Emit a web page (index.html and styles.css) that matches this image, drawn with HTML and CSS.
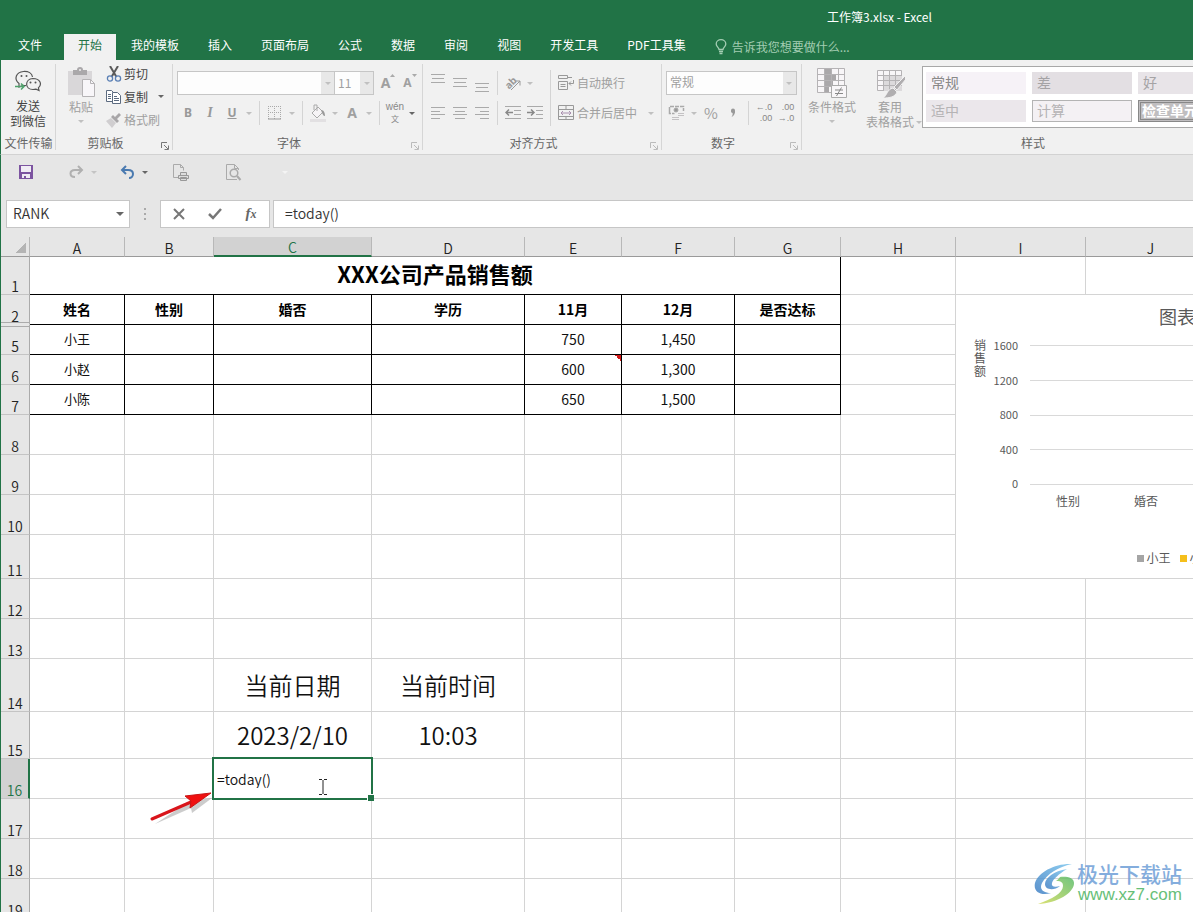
FILE: index.html
```html
<!DOCTYPE html>
<html lang="zh-CN">
<head>
<meta charset="utf-8">
<title>工作簿3.xlsx - Excel</title>
<link rel="stylesheet" href="styles.css">
</head>
<body>
<div class="app">
  <header class="titlebar">
    <div class="doc-title">工作簿3.xlsx - Excel</div>
    <nav class="tabs">
      <button class="tab file">文件</button>
      <button class="tab active">开始</button>
      <button class="tab">我的模板</button>
      <button class="tab">插入</button>
      <button class="tab">页面布局</button>
      <button class="tab">公式</button>
      <button class="tab">数据</button>
      <button class="tab">审阅</button>
      <button class="tab">视图</button>
      <button class="tab">开发工具</button>
      <button class="tab">PDF工具集</button>
      <button class="tell"><svg width="12" height="16" viewBox="0 0 12 16" fill="none" stroke="currentColor" stroke-width="1.3"><path d="M4 10.500C4 8.500 1.200 7.500 1.200 5a4.800 4.300 0 0 1 9.600 0c0 2.500-2.800 3.500-2.800 5.500zM4 12.500h4M4.500 14.500h3"/></svg>告诉我您想要做什么...</button>
    </nav>
  </header>

  <section class="ribbon">
    <div class="group g-send">
      <div class="body">
        <button class="big dark">
          <svg width="28" height="30" viewBox="0 0 28 30" fill="none" stroke="#555" stroke-width="1.200"><path d="M12 18.500c-1 .1-2 .1-3-.2L5 20v-3.500C-.500 12 2 5 9.500 4.500c5-.3 8.500 2 9 5.500"/><path d="M19 11.500c-8.500.5-8.500 11 0 11 1 0 2-.1 3-.4l3 1.400-.6-2.600C28.500 17 26 11.500 19 11.500z"/><g fill="#555" stroke="none"><circle cx="7.500" cy="9" r="1"/><circle cx="12.500" cy="9" r="1"/><circle cx="16.500" cy="15.500" r="1"/><circle cx="21.500" cy="15.500" r="1"/></g><path d="M1 19.500h9M7 16.500l3 3-3 3" stroke="#4fa36c" stroke-width="1.500"/></svg>
          <span>发送<br>到微信</span>
        </button>
      </div>
      <div class="label">文件传输</div>
    </div>

    <div class="group g-clip">
      <div class="body">
        <button class="big">
          <svg width="30" height="31" viewBox="0 0 30 31"><path d="M2 4h24v24H2z" fill="#d9d7d9"/><path d="M7 3h4a3 3 0 0 1 6 0h4v5H7z" fill="#aaa8aa"/><circle cx="14" cy="3" r="1" fill="#eee"/><path d="M16.500 12.500h8l4 4v13h-12z" fill="#f8f6f9" stroke="#b5b3b5"/><path d="M24.500 12.500v4h4" fill="none" stroke="#b5b3b5"/></svg>
          <span>粘贴</span><i class="arr"></i>
        </button>
        <div class="stack">
          <button class="item dark"><svg width="16" height="16" viewBox="0 0 16 16" fill="none"><path d="M4 0l6.500 11M12 0L5.500 11" stroke="#5a5a5a" stroke-width="2"/><circle cx="4" cy="12.500" r="2.600" stroke="#5b80b5" stroke-width="1.300"/><circle cx="12" cy="12.500" r="2.600" stroke="#5b80b5" stroke-width="1.300"/></svg>剪切</button>
          <button class="item dark"><svg width="16" height="16" viewBox="0 0 16 16" fill="#fff" stroke="#5c6b80"><path d="M.5 1.500h5l3 3v8h-8z"/><path d="M2 5.500h3M2 7.500h3M2 9.500h3"/><path d="M6.500 3.500h5l3 3v8h-8z"/><path d="M8 7.500h3M8 9.500h5M8 11.500h5"/></svg>复制<i class="arr"></i></button>
          <button class="item"><svg width="16" height="16" viewBox="0 0 16 16"><path d="M0 9l5-3 5 5-4 5z" fill="#d0ced0"/><path d="M5 5l2-2 2 2 4-4 2 2-4 4 2 2-2 2z" fill="#a8a6a8"/></svg>格式刷</button>
        </div>
      </div>
      <div class="label">剪贴板</div>
      <button class="launch" aria-label="剪贴板选项"><svg width="8" height="8" viewBox="0 0 8 8" fill="none" stroke="#777"><path d="M.5 6V.5H6M3 3l4 4M7.500 3.500v4h-4"/></svg></button>
    </div>

    <div class="group g-font">
      <div class="body rows">
        <div class="row">
          <span class="combo fname"><input aria-label="字体"><button aria-label="字体列表"><i class="arr"></i></button></span>
          <span class="combo fsize"><input aria-label="字号" value="11"><button aria-label="字号列表"><i class="arr"></i></button></span>
          <button class="ic"><span class="glyph">A</span><svg width="5" height="12" viewBox="0 0 5 12"><path d="M0 3h5L2.500 0z" fill="#aaa"/></svg></button>
          <button class="ic"><span class="glyph small">A</span><svg width="5" height="12" viewBox="0 0 5 12"><path d="M0 0h5L2.500 3z" fill="#aaa"/></svg></button>
        </div>
        <div class="row">
          <button class="ic"><b>B</b></button><button class="ic"><i class="ital">I</i></button><button class="ic"><u>U</u></button><button class="dd"><i class="arr"></i></button>
          <i class="sep"></i>
          <button class="ic"><svg width="14" height="14" viewBox="0 0 14 14" fill="none" stroke="#aaa"><path d="M.5 0v13M6.500 0v13M12.500 0v13M0 .5h13M0 6.500h13" stroke-dasharray="1 1"/><path d="M0 13h13" stroke="#999"/></svg></button><button class="dd"><i class="arr"></i></button>
          <i class="sep"></i>
          <button class="ic"><svg width="18" height="18" viewBox="0 0 18 18" fill="none"><path d="M3 9l6-6 5 5-6 6z" fill="#f6f4f6" stroke="#aaa"/><path d="M5 6V1h3v6" stroke="#aaa"/><path d="M12 6c3 0 4 3 4 6-2 0-2-2-3-3z" fill="#999"/><path d="M1 15h16v3H1z" fill="#e2e0e2"/></svg></button><button class="dd"><i class="arr"></i></button>
          <button class="ic"><span class="glyph">A</span></button><button class="dd"><i class="arr"></i></button>
          <i class="sep"></i>
          <button class="ic"><span class="wen"><span>wén</span><span>文</span></span></button><button class="dd dark"><i class="arr"></i></button>
        </div>
      </div>
      <div class="label">字体</div>
      <button class="launch" aria-label="字体选项"><svg width="8" height="8" viewBox="0 0 8 8" fill="none" stroke="#bbb"><path d="M.5 6V.5H6M3 3l4 4M7.500 3.500v4h-4"/></svg></button>
    </div>

    <div class="group g-align">
      <div class="body">
        <div class="rows">
          <div class="row">
            <button class="ic"><svg width="14" height="18" viewBox="0 0 14 18" stroke="#aaa"><path d="M0 .5h14M1 4.500h12M0 8.500h14"/></svg></button>
            <button class="ic"><svg width="14" height="18" viewBox="0 0 14 18" stroke="#aaa"><path d="M0 4.500h14M1 8.500h12M0 12.500h14"/></svg></button>
            <button class="ic"><svg width="14" height="18" viewBox="0 0 14 18" stroke="#aaa"><path d="M0 9.500h14M1 13.500h12M0 17.500h14"/></svg></button>
            <i class="sep"></i>
            <button class="ic"><svg class="abicon" width="18" height="18" viewBox="0 0 18 18"><text x="0" y="12" transform="rotate(-45 7 8)" class="abtxt">ab</text><path d="M7 16l9-9M11.500 7H16v4.500" fill="none" stroke="#999"/></svg></button><button class="dd"><i class="arr"></i></button>
          </div>
          <div class="row">
            <button class="ic"><svg width="14" height="12" viewBox="0 0 14 12" stroke="#aaa"><path d="M0 .5h14M0 4.500h9M0 7.500h14M0 11.500h9"/></svg></button>
            <button class="ic"><svg width="14" height="12" viewBox="0 0 14 12" stroke="#aaa"><path d="M0 .5h14M2 4.500h10M0 7.500h14M2 11.500h10"/></svg></button>
            <button class="ic"><svg width="14" height="12" viewBox="0 0 14 12" stroke="#aaa"><path d="M0 .5h14M5 4.500h9M0 7.500h14M5 11.500h9"/></svg></button>
            <i class="sep"></i>
            <button class="ic"><svg width="16" height="14" viewBox="0 0 16 14" fill="none" stroke="#aaa"><path d="M0 .5h16M9 4.500h7M9 8.500h7M0 12.500h16"/><path d="M1 6.500h7M4 3.500l-3 3 3 3" stroke="#888" stroke-width="1.500"/></svg></button>
            <button class="ic"><svg width="16" height="14" viewBox="0 0 16 14" fill="none" stroke="#aaa"><path d="M0 .5h16M9 4.500h7M9 8.500h7M0 12.500h16"/><path d="M0 6.500h7M4 3.500l3 3-3 3" stroke="#888" stroke-width="1.500"/></svg></button>
          </div>
        </div>
        <i class="sep tall"></i>
        <div class="rows">
          <button class="item"><svg width="16" height="16" viewBox="0 0 16 16" fill="none" stroke="#999"><path d="M.5.500h9v3h-9zM9 2.500h5M.5 6.500h9v8h-9zM2.500 9.500h5M2.500 11.500h5M15.500 5v3.500H11M13 6.500l-2 2 2 2"/></svg>自动换行</button>
          <button class="item"><svg width="16" height="16" viewBox="0 0 16 16" fill="none" stroke="#999"><path d="M.5.500h15v14H.5zM0 4.500h16M0 11.500h16M8 1v3M8 12v3"/><path d="M3 8h10M5 6L3 8l2 2M11 6l2 2-2 2" stroke="#a98fae"/></svg>合并后居中<i class="arr"></i></button>
        </div>
      </div>
      <div class="label">对齐方式</div>
      <button class="launch" aria-label="对齐选项"><svg width="8" height="8" viewBox="0 0 8 8" fill="none" stroke="#bbb"><path d="M.5 6V.5H6M3 3l4 4M7.500 3.500v4h-4"/></svg></button>
    </div>

    <div class="group g-num">
      <div class="body rows">
        <div class="row"><span class="numfmt"><select aria-label="数字格式"><option>常规</option></select><i class="arr"></i></span></div>
        <div class="row">
          <button class="ic"><svg width="18" height="16" viewBox="0 0 18 16" fill="none" stroke="#aaa"><path d="M1.500 6V1.500h14V6M1.500 6v2.500h5" stroke-width="1.500" stroke-dasharray="4 1"/><circle cx="8" cy="5" r="2" fill="#999"/><path d="M10 8.500h6M10 10.500h6M4 12.500h7M4 14.500h7" stroke="#c4c2c4"/></svg></button><button class="dd"><i class="arr"></i></button>
          <button class="ic"><span class="pct">%</span></button>
          <button class="ic"><svg width="8" height="10" viewBox="0 0 8 10"><path d="M2 2.500a2 2 0 0 1 4 0C6.500 5 5 8 2.500 9c1-1.500 1.500-3 1-4A2 2 0 0 1 2 2.500z" fill="#999"/></svg></button>
          <i class="sep"></i>
          <button class="ic"><span class="dec">←.0<br>.00</span></button>
          <button class="ic"><span class="dec">.00<br>→.0</span></button>
        </div>
      </div>
      <div class="label">数字</div>
      <button class="launch" aria-label="数字选项"><svg width="8" height="8" viewBox="0 0 8 8" fill="none" stroke="#bbb"><path d="M.5 6V.5H6M3 3l4 4M7.500 3.500v4h-4"/></svg></button>
    </div>

    <div class="group g-style">
      <div class="body">
        <button class="big cond">
          <svg width="30" height="31" viewBox="0 0 30 31" fill="none" stroke="#b5b3b5"><path d="M.5 1.500h27v24H.5z" fill="#f8f6f8"/><path d="M8 2h6v5H8zM8 8h11v5H8zM8 14h8v5H8zM8 20h4v5H8z" fill="#aaa8aa" stroke="none"/><path d="M7.500 1v24M14.500 1v24M21.500 1v24M0 7.500h28M0 13.500h28M0 19.500h28"/><path d="M14.500 18.500h15v12h-15z" fill="#f8f6f8" stroke="#aaa"/><path d="M18 23h8M18 26.500h8M24.500 20.500l-5 8.500" stroke="#888"/></svg>
          <span>条件格式</span><i class="arr"></i>
        </button>
        <button class="big tbl">
          <svg width="30" height="31" viewBox="0 0 30 31" fill="none" stroke="#b5b3b5"><path d="M2.500 3.500h24v20h-24z" fill="#f8f6f8"/><path d="M9 9h18v15H9z" fill="#dcdadc" stroke="none"/><path d="M8.500 3v20M14.500 3v20M20.500 3v20M2 8.500h25M2 13.500h25M2 18.500h25"/><path d="M31 8L19 20l3 3 9-11zM18 21l4 4c-2 5-7 6-14 6 4-2 4-9 10-10z" fill="#b0aeb0" stroke="#f1f1f1"/></svg>
          <span>套用<br>表格格式<i class="arr"></i></span>
        </button>
        <div class="gallery">
          <button class="st normal">常规</button><button class="st bad">差</button><button class="st good">好</button>
          <button class="st neutral">适中</button><button class="st calc">计算</button><button class="st check">检查单元格</button>
        </div>
      </div>
      <div class="label">样式</div>
    </div>
  </section>

  <div class="qat">
    <button class="q"><svg width="14" height="14" viewBox="0 0 14 14"><path d="M0 0h14v14H0z" fill="#7c54a0"/><path d="M2 1h10v6H2zM3 9h8v4H3z" fill="#f0ecf4"/><path d="M5 11h2v2H5z" fill="#7c54a0"/></svg></button>
    <button class="q redo"><svg width="15" height="14" viewBox="0 0 15 14" fill="none" stroke="#b0b0b0" stroke-width="2"><path d="M13 5H6C0 5 0 12 6 12M9 1l4 4-4 4"/></svg></button><button class="dd pale"><i class="arr"></i></button>
    <button class="q undo"><svg width="15" height="14" viewBox="0 0 15 14" fill="none" stroke="#4a7ab0" stroke-width="2"><path d="M2 5h6c7 0 6 8 1 8M6 1L2 5l4 4"/></svg></button><button class="dd dark"><i class="arr"></i></button>
    <button class="q print"><svg width="17" height="17" viewBox="0 0 17 17" fill="none" stroke="#aaa"><path d="M5 13.500H.5V.5h7l3 3v3M7.500.5v3h3"/><path d="M7.500 8.500h6v3h-6zM5.500 11.500h10v3h-10zM7.500 13.500h6v3h-6z" fill="#ddd" stroke="#999"/></svg></button>
    <button class="q view"><svg width="16" height="17" viewBox="0 0 16 17" fill="none" stroke="#aaa"><path d="M11 15.500H.5V.5h8l4 4V6M8.500.5v4h4"/><circle cx="8" cy="9" r="3.800" stroke-width="1.500"/><path d="M11 12l3.500 4" stroke-width="2"/></svg></button>
    <button class="dd more"><i class="arr"></i></button>
  </div>

  <div class="fbar">
    <span class="combo namebox"><input aria-label="名称框" value="RANK"><button class="dark" aria-label="名称列表"><i class="arr"></i></button></span>
    <span class="dots"></span>
    <div class="fbtns">
      <button aria-label="取消"><svg width="12" height="12" viewBox="0 0 12 12" stroke="#777" stroke-width="2"><path d="M1 1l10 10M11 1L1 11"/></svg></button>
      <button aria-label="输入"><svg width="14" height="12" viewBox="0 0 14 12" fill="none" stroke="#777" stroke-width="2.500"><path d="M1 6l4 4 8-9"/></svg></button>
      <button><span class="fx">f<small>x</small></span></button>
    </div>
    <input class="formula" aria-label="编辑栏" value="=today()">
  </div>

  <main class="sheet">
    <table class="grid">
      <colgroup><col class="c0"><col class="cA"><col class="cB"><col class="cC"><col class="cD"><col class="cE"><col class="cF"><col class="cG"><col class="cH"><col class="cI"><col class="cJ"></colgroup>
      <thead><tr><th class="corner"></th><th>A</th><th>B</th><th class="sel">C</th><th>D</th><th>E</th><th>F</th><th>G</th><th>H</th><th>I</th><th>J</th></tr></thead>
      <tbody>
      <tr class="h38"><th>1</th><td class="k title" colspan="7">XXX公司产品销售额</td><td></td><td></td><td></td></tr>
      <tr class="h30 heads"><th class="fold-above">2</th><td class="k">姓名</td><td class="k">性别</td><td class="k">婚否</td><td class="k">学历</td><td class="k">11月</td><td class="k">12月</td><td class="k">是否达标</td><td></td><td></td><td></td></tr>
      <tr class="h30"><th class="fold-below">5</th><td class="k">小王</td><td class="k"></td><td class="k"></td><td class="k"></td><td class="k num">750</td><td class="k num">1,450</td><td class="k"></td><td></td><td></td><td></td></tr>
      <tr class="h30"><th>6</th><td class="k">小赵</td><td class="k"></td><td class="k"></td><td class="k"></td><td class="k num note">600</td><td class="k num">1,300</td><td class="k"></td><td></td><td></td><td></td></tr>
      <tr class="h30"><th>7</th><td class="k">小陈</td><td class="k"></td><td class="k"></td><td class="k"></td><td class="k num">650</td><td class="k num">1,500</td><td class="k"></td><td></td><td></td><td></td></tr>
      <tr class="h40"><th>8</th><td></td><td></td><td></td><td></td><td></td><td></td><td></td><td></td><td></td><td></td></tr>
      <tr class="h40"><th>9</th><td></td><td></td><td></td><td></td><td></td><td></td><td></td><td></td><td></td><td></td></tr>
      <tr class="h40"><th>10</th><td></td><td></td><td></td><td></td><td></td><td></td><td></td><td></td><td></td><td></td></tr>
      <tr class="h44"><th>11</th><td></td><td></td><td></td><td></td><td></td><td></td><td></td><td></td><td></td><td></td></tr>
      <tr class="h40"><th>12</th><td></td><td></td><td></td><td></td><td></td><td></td><td></td><td></td><td></td><td></td></tr>
      <tr class="h40"><th>13</th><td></td><td></td><td></td><td></td><td></td><td></td><td></td><td></td><td></td><td></td></tr>
      <tr class="h53 large"><th>14</th><td></td><td></td><td>当前日期</td><td>当前时间</td><td></td><td></td><td></td><td></td><td></td><td></td></tr>
      <tr class="h47 large"><th>15</th><td></td><td></td><td>2023/2/10</td><td>10:03</td><td></td><td></td><td></td><td></td><td></td><td></td></tr>
      <tr class="h40"><th class="sel">16</th><td></td><td></td><td class="editing">
        <div class="editor"><input aria-label="C16" value="=today()"><svg class="ibeam" width="8" height="16" viewBox="0 0 8 16" fill="none" stroke="#222"><path d="M0 .5h3M5 .5h3M4 1v14M0 15.500h3M5 15.500h3"/></svg></div>
        <svg class="pointer" width="66" height="34" viewBox="0 0 66 34"><path d="M5 30L41 14l1 5L62 4 40 7z" transform="translate(1 3)" fill="#999" opacity=".5"/><path d="M3 28L42 11" stroke="#d9151b" stroke-width="3" stroke-linecap="round"/><path d="M62 2L36 5l6 5-1 7z" fill="#f01010" stroke="#c81414"/></svg>
      </td><td></td><td></td><td></td><td></td><td></td><td></td><td></td></tr>
      <tr class="h40"><th>17</th><td></td><td></td><td></td><td></td><td></td><td></td><td></td><td></td><td></td><td></td></tr>
      <tr class="h40"><th>18</th><td></td><td></td><td></td><td></td><td></td><td></td><td></td><td></td><td></td><td></td></tr>
      <tr class="h40"><th>19</th><td></td><td></td><td></td><td></td><td></td><td></td><td></td><td></td><td></td><td></td></tr>
      </tbody>
    </table>

    <figure class="chart">
      <figcaption>图表标题</figcaption>
      <div class="plot">
        <div class="axis-title">销售额</div>
        <div class="ticks"><span>1600</span><span>1200</span><span>800</span><span>400</span><span>0</span></div>
        <div class="lines"><i></i><i></i><i></i><i></i><i></i></div>
      </div>
      <div class="cats"><span>性别</span><span>婚否</span><span>学历</span><span>11月</span><span>12月</span></div>
      <div class="legend"><span class="gray">小王</span><span class="gold">小赵</span><span class="blue">小陈</span></div>
    </figure>

    <div class="watermark">
      <svg width="42" height="42" viewBox="0 0 42 42"><defs><linearGradient id="wb" x1="0" y1="1" x2="1" y2="0"><stop offset="0" stop-color="#3f7fc4"/><stop offset="1" stop-color="#7cc6ee"/></linearGradient><linearGradient id="wg" x1="0" y1="1" x2="1" y2="0"><stop offset="0" stop-color="#d5dc5a"/><stop offset="1" stop-color="#58bb6a"/></linearGradient></defs><path d="M38 1C22 0 4 9 1 20c-2 9 6 13 16 10-8 0-12-4-9-10C13 11 24 4 38 1z" fill="url(#wb)"/><path d="M33 6C20 8 11 15 11 21c0 6 9 7 15 2-6 2-9 0-8-3 1-4 7-9 15-14z" fill="url(#wb)"/><path d="M26 14c5-1 15 0 14 7-1 9-16 19-36 20 14-5 25-11 25-18 0-3-1-5-7-5 2-1 3-3 4-4z" fill="url(#wg)"/></svg>
      <div><div class="wm1">极光下载站</div><div class="wm2">www.xz7.com</div></div>
    </div>
  </main>
</div>
</body>
</html>
```
FILE: styles.css
```css
* { box-sizing: border-box; }
html, body { margin: 0; height: 100%; }
body {
  font: 12px/16px "Noto Sans CJK SC", "Noto Sans", sans-serif;
  color: #444;
  background: #e6e6e6;
  overflow: hidden;
}
button, input, select { font: inherit; color: inherit; border: 0; padding: 0; margin: 0; background: none; outline: 0; border-radius: 0; }
input { min-width: 0; }
svg { display: block; flex: none; }

.app { display: flex; flex-direction: column; height: 100vh; }

.titlebar { background: #217346; color: #fff; }
.doc-title { height: 34px; line-height: 33px; padding-left: 566px; text-align: center; white-space: nowrap; }
.tabs { display: flex; gap: 1px; }
.tab { height: 26px; padding: 0 14px 4px; white-space: nowrap; }
.tab.file { padding: 0 18px 4px; }
.tab.active { background: #f1f1f1; color: #217346; margin-left: 3px; }
.tell { display: flex; align-items: center; gap: 5px; height: 26px; padding: 0 0 1px 14px; color: #a3cdb2; white-space: nowrap; }

.ribbon { display: flex; height: 95px; flex: none; overflow: hidden; background: #f1f1f1; border-bottom: 1px solid #d2d2d2; border-left: 1px solid #217346; color: #a0a0a0; }
.group { position: relative; display: flex; flex-direction: column; flex: none; white-space: nowrap; }
.group::after { content: ""; position: absolute; right: 0; top: 4px; bottom: 4px; width: 1px; background: #d6d6d6; }
.body { flex: 1; display: flex; }
.label { height: 20px; line-height: 18px; text-align: center; color: #666; }
.g-send { width: 55px; }
.g-clip { width: 117px; }
.g-clip .label { padding-right: 18px; }
.g-font { width: 250px; }
.g-font .label, .g-num .label, .g-align .label { padding-right: 18px; }
.g-align { width: 239px; }
.g-num { width: 140px; }
.g-style { width: 462px; }
.launch { position: absolute; right: 4px; bottom: 4px; }

.dark { color: #444; }
.arr { display: inline-block; flex: none; width: 0; height: 0; border: 3px solid transparent; border-top-color: #c0c0c0; border-bottom: 0; }
.dark .arr { border-top-color: #666; }
.pale .arr { border-top-color: #c4c4c4; }

.big { display: flex; flex-direction: column; align-items: center; padding-top: 7px; line-height: 15px; width: 54px; }
.big span { margin-top: 1px; }
.big > .arr { margin-top: 6px; }
.g-clip .big { width: 50px; }
.stack { display: flex; flex-direction: column; padding-top: 2px; }
.item { display: flex; align-items: center; gap: 2px; height: 23px; }
.item .arr { margin-left: 8px; }

.rows { display: flex; flex-direction: column; gap: 6px; padding: 11px 0 0 4px; }
.row, .rows .item { display: flex; align-items: center; height: 24px; }
.rows .item { gap: 3px; }
.g-align .rows + .sep + .rows { padding-left: 3px; }
.ic { width: 22px; height: 24px; display: flex; align-items: center; justify-content: center; flex: none; }
.dd { width: 12px; height: 24px; display: flex; align-items: center; justify-content: center; flex: none; }
.sep { width: 1px; height: 24px; margin: 0 4px; background: #d4d4d4; flex: none; }
.sep.tall { height: 56px; margin-top: 10px; }
.g-font b, .g-font u, .ital { font: bold 12px/16px "Noto Sans", sans-serif; color: #999; }
.g-font .ital { font: italic bold 14px/16px "Liberation Serif", serif; }
.glyph { font: bold 14px/16px "Noto Sans", sans-serif; }
.glyph.small { font-size: 12px; }
.g-font .row:first-child .ic svg { margin-bottom: 6px; }
.wen { display: flex; flex-direction: column; align-items: center; font: 8px/12px "Noto Sans CJK SC", sans-serif; color: #888; }
.wen span:first-child { font: 10px/12px "Liberation Sans", sans-serif; }
.pct { font-size: 15px; }
.dec { font: 9px/11px "Liberation Sans", sans-serif; text-align: right; color: #888; }
.abicon { overflow: visible; }
.abtxt { font: bold 10px "Noto Sans", sans-serif; fill: #999; }

.combo { display: flex; height: 24px; border: 1px solid #c6c6c6; background: #fdfdfd; }
.combo input { flex: 1; padding-left: 3px; }
.combo button { width: 13px; background: #e8e8e8; display: flex; align-items: center; justify-content: center; }
.fname { width: 158px; }
.fsize { width: 39px; margin-right: 3px; border-left: 0; }
.numfmt { position: relative; width: 131px; }
.numfmt select { appearance: none; display: block; width: 100%; height: 24px; padding: 0 0 2px 3px; border: 1px solid #c6c6c6; background: linear-gradient(to left, #e8e8e8 13px, #fdfdfd 13px); opacity: 1; }
.numfmt .arr { position: absolute; right: 5px; top: 11px; }

.cond { width: 60px; }
.g-style .tbl { width: 56px; }
.g-style .tbl .arr { margin: 0 -8px 3px 2px; }
.gallery { display: grid; grid-template-columns: repeat(3, 100px); grid-template-rows: 22px 22px; gap: 6px; align-content: start; margin: 6px 0 0 4px; padding: 5px 3px 5px; border: 1px solid #a8a8a8; width: 340px; height: 62px; background: #fff; overflow: hidden; }
.st { text-align: left; padding: 0 0 3px 5px; font-size: 14px; line-height: 18px; color: #a5a3a5; overflow: visible; }
.normal { background: #f6f2f7; color: #888; }
.bad { background: #e3dfe3; }
.good { background: #e8e4e8; }
.neutral { background: #ebe7eb; color: #b5b3b5; }
.calc { background: #f4f1f4; border: 1px solid #b4b4b4; padding-left: 4px; color: #b5b3b5; }
.check { background: #c0bec0; border: 3px double #888; padding: 0 0 1px 1px; line-height: 15px; color: #fff; font-weight: bold; }

.qat { display: flex; align-items: center; height: 34px; flex: none; padding-left: 14px; border-left: 1px solid #217346; }
.q { width: 22px; display: flex; justify-content: center; flex: none; }
.redo { margin-left: 28px; }
.undo { margin-left: 16px; }
.qat .dd { margin-left: 1px; }
.print { margin-left: 19px; }
.view { margin-left: 31px; }
.qat .more { margin-left: 34px; }
.more .arr { border-top-color: #f4f4f4; }

.fbar { display: flex; align-items: center; height: 48px; flex: none; padding: 1px 0 0 5px; border-left: 1px solid #217346; font-size: 14px; color: #333; }
.fbar .combo, .fbtns, .formula { height: 28px; border: 1px solid #c6c6c6; background: #fff; }
.namebox { width: 124px; }
.namebox input { padding: 0 0 2px 6px; }
.namebox button { width: 18px; background: none; }
.namebox .arr { border-width: 4px; border-bottom: 0; }
.dots { width: 2px; height: 12px; margin: 0 14px; background: repeating-linear-gradient(#aaa 0 2px, transparent 2px 5px); }
.fbtns { display: flex; width: 110px; margin-right: 3px; }
.fbtns button { flex: 1; display: flex; align-items: center; justify-content: center; }
.fx { font: italic bold 15px/16px "Liberation Serif", serif; color: #666; }
.fx small { font-size: 12px; }
.formula { flex: 1; padding: 0 0 2px 11px; border-right: 0; }
.namebox input, .formula, .editor input { font-weight: 350; }

.sheet { position: relative; flex: 1; min-height: 0; overflow: hidden; border-left: 1px solid #217346; background: #fff; }
.grid { border-collapse: separate; border-spacing: 0; table-layout: fixed; width: 1215px; }
.c0 { width: 29px; } .cA { width: 95px; } .cB { width: 89px; } .cC { width: 158px; } .cD { width: 153px; }
.cE { width: 97px; } .cF { width: 113px; } .cG { width: 106px; } .cH { width: 115px; } .cI { width: 130px; } .cJ { width: 130px; }
.grid th, .grid td { padding: 0; border: solid #d4d4d4; border-width: 0 1px 1px 0; color: #111; }
.grid th { font-size: 14px; font-weight: 350; line-height: 16px; background: #e6e6e6; border-right-color: #ababab; color: #222; vertical-align: bottom; }
.grid thead th { height: 20px; line-height: 15px; border-bottom-color: #9a9a9a; padding-top: 3px; border-right-color: #b8b8b8; }
.grid tbody th { border-bottom-color: #c4c4c4; }
.grid thead .sel { background: #d2d2d2; color: #217346; border-bottom: 2px solid #217346; }
.grid tbody .sel { background: #d2d2d2; color: #217346; border-right: 2px solid #217346; }
.grid .corner { background: linear-gradient(135deg, transparent 50%, #b4b4b4 50%) right 3px bottom 3px / 11px 11px no-repeat #e6e6e6; }
.grid .fold-above { border-bottom-color: #e6e6e6; background: linear-gradient(#ababab, #ababab) 0 calc(100% - 1px) / 100% 1px no-repeat #e6e6e6; }
.grid .fold-below { background: linear-gradient(#ababab, #ababab) 0 1px / 100% 1px no-repeat #e6e6e6; }
.grid td { font-size: 13px; line-height: 18px; text-align: center; padding-bottom: 2px; }
.grid .num { font-size: 14px; }
.grid .k { border-color: #000; }
.grid .title { font-size: 22px; line-height: 24px; font-weight: bold; padding-bottom: 5px; color: #000; }
.grid .heads td { font-size: 14px; font-weight: bold; color: #000; }
.grid .large td { font-size: 24px; line-height: 30px; font-weight: 350; padding-bottom: 0; }
.note { background: linear-gradient(45deg, transparent 50%, #d01818 50%) right top / 6px 6px no-repeat; }
.h30 { height: 30px; } .h38 { height: 38px; } .h40 { height: 40px; } .h44 { height: 44px; } .h47 { height: 47px; } .h53 { height: 53px; }
.editing { position: relative; }
.editor { position: absolute; z-index: 1; inset: -2px; border: 2px solid #217346; background: #fff; display: flex; }
.editor input { flex: 1; padding-left: 3px; font-size: 14px; }
.editor::after { content: ""; position: absolute; right: -3px; bottom: -3px; width: 6px; height: 6px; background: #217346; border: solid #fff; border-width: 1px 0 0 1px; }
.ibeam { position: absolute; right: 44px; top: 20px; }
.pointer { position: absolute; right: 156px; top: 32px; }

.chart { position: absolute; left: 954px; top: 57px; width: 480px; height: 285px; margin: 0; background: #fff; border: 1px solid #d4d4d4; color: #595959; }
.chart figcaption { text-align: center; font-size: 18px; line-height: 24px; padding-top: 9px; }
.plot { display: flex; height: 156px; margin-top: 9px; }
.axis-title { width: 12px; margin: 0 0 0 18px; line-height: 13px; white-space: normal; padding-top: 1px; }
.ticks { width: 32px; display: flex; flex-direction: column; justify-content: space-between; text-align: right; font-size: 11px; padding-bottom: 2px; }
.lines { flex: 1; display: flex; flex-direction: column; justify-content: space-between; margin: 8px 15px 8px 12px; }
.lines i { height: 1px; background: #d9d9d9; }
.cats { display: flex; padding: 0 15px 0 73px; }
.cats span { flex: 1; text-align: center; }
.legend { display: flex; justify-content: center; gap: 10px; margin: 41px 0 0 4px; }
.legend span { display: flex; align-items: center; gap: 2px; }
.legend span::before { content: ""; width: 7px; height: 7px; background: #a5a5a5; }
.legend .gold::before { background: #f5bf1b; }
.legend .blue::before { background: #4472c4; }

.watermark { position: absolute; right: 11px; bottom: 7px; display: flex; align-items: center; gap: 1px; opacity: .85; }
.wm1 { font-size: 21px; line-height: 23px; color: #6f9fd8; font-weight: 500; }
.wm2 { font: 17px/20px "Liberation Sans", sans-serif; color: #4db562; padding-left: 1px; }
```
